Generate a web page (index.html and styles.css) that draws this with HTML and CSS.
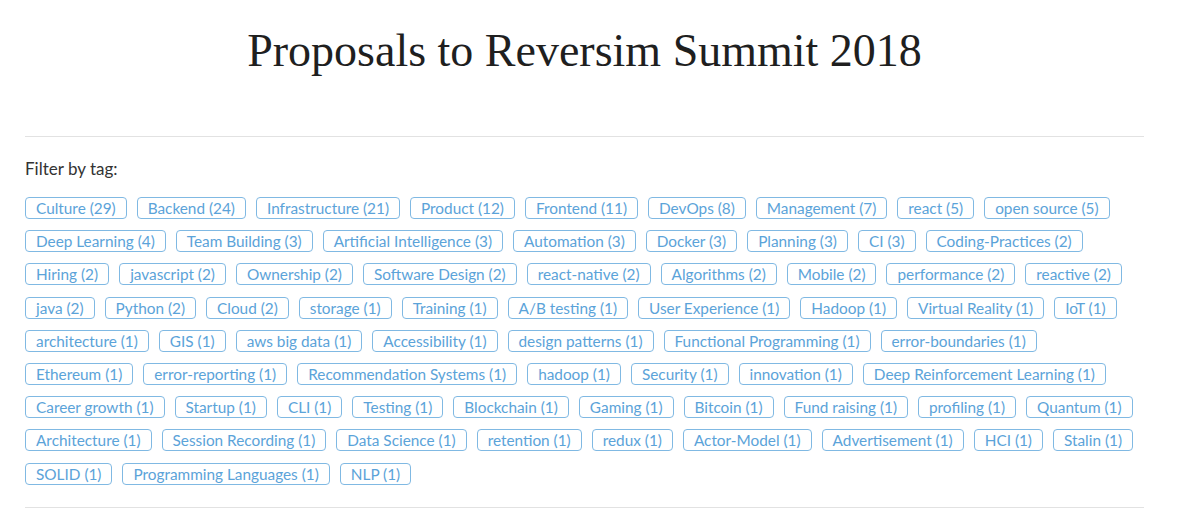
FILE: index.html
```html
<!DOCTYPE html>
<html>
<head>
<meta charset="utf-8">
<link rel="stylesheet" href="styles.css">
</head>
<body>
<div class="container">
  <h1 class="title">Proposals to Reversim Summit 2018</h1>
  <hr class="rule">
  <div class="filter-label">Filter by tag:</div>
  <div class="tags">
    <span class="tag">Culture (29)</span>
    <span class="tag">Backend (24)</span>
    <span class="tag">Infrastructure (21)</span>
    <span class="tag">Product (12)</span>
    <span class="tag">Frontend (11)</span>
    <span class="tag">DevOps (8)</span>
    <span class="tag">Management (7)</span>
    <span class="tag">react (5)</span>
    <span class="tag">open source (5)</span>
    <span class="tag">Deep Learning (4)</span>
    <span class="tag">Team Building (3)</span>
    <span class="tag">Artificial Intelligence (3)</span>
    <span class="tag">Automation (3)</span>
    <span class="tag">Docker (3)</span>
    <span class="tag">Planning (3)</span>
    <span class="tag">CI (3)</span>
    <span class="tag">Coding-Practices (2)</span>
    <span class="tag">Hiring (2)</span>
    <span class="tag">javascript (2)</span>
    <span class="tag">Ownership (2)</span>
    <span class="tag">Software Design (2)</span>
    <span class="tag">react-native (2)</span>
    <span class="tag">Algorithms (2)</span>
    <span class="tag">Mobile (2)</span>
    <span class="tag">performance (2)</span>
    <span class="tag">reactive (2)</span>
    <span class="tag">java (2)</span>
    <span class="tag">Python (2)</span>
    <span class="tag">Cloud (2)</span>
    <span class="tag">storage (1)</span>
    <span class="tag">Training (1)</span>
    <span class="tag">A/B testing (1)</span>
    <span class="tag">User Experience (1)</span>
    <span class="tag">Hadoop (1)</span>
    <span class="tag">Virtual Reality (1)</span>
    <span class="tag">IoT (1)</span>
    <span class="tag">architecture (1)</span>
    <span class="tag">GIS (1)</span>
    <span class="tag">aws big data (1)</span>
    <span class="tag">Accessibility (1)</span>
    <span class="tag">design patterns (1)</span>
    <span class="tag">Functional Programming (1)</span>
    <span class="tag">error-boundaries (1)</span>
    <span class="tag">Ethereum (1)</span>
    <span class="tag">error-reporting (1)</span>
    <span class="tag">Recommendation Systems (1)</span>
    <span class="tag">hadoop (1)</span>
    <span class="tag">Security (1)</span>
    <span class="tag">innovation (1)</span>
    <span class="tag">Deep Reinforcement Learning (1)</span>
    <span class="tag">Career growth (1)</span>
    <span class="tag">Startup (1)</span>
    <span class="tag">CLI (1)</span>
    <span class="tag">Testing (1)</span>
    <span class="tag">Blockchain (1)</span>
    <span class="tag">Gaming (1)</span>
    <span class="tag">Bitcoin (1)</span>
    <span class="tag">Fund raising (1)</span>
    <span class="tag">profiling (1)</span>
    <span class="tag">Quantum (1)</span>
    <span class="tag">Architecture (1)</span>
    <span class="tag">Session Recording (1)</span>
    <span class="tag">Data Science (1)</span>
    <span class="tag">retention (1)</span>
    <span class="tag">redux (1)</span>
    <span class="tag">Actor-Model (1)</span>
    <span class="tag">Advertisement (1)</span>
    <span class="tag">HCI (1)</span>
    <span class="tag">Stalin (1)</span>
    <span class="tag">SOLID (1)</span>
    <span class="tag">Programming Languages (1)</span>
    <span class="tag">NLP (1)</span>
  </div>
  <hr class="rule rule-bottom">
</div>
</body>
</html>
```

FILE: styles.css
```css
html, body {
  margin: 0;
  padding: 0;
  background: #fff;
}
body {
  font-family: "Lato", "Open Sans", sans-serif;
  color: #333;
}
.container {
  width: 1119px;
  margin-left: 25px;
}
.title {
  font-family: "Liberation Serif", "DejaVu Serif", serif;
  font-weight: normal;
  font-size: 46px;
  line-height: 56px;
  color: #1f1f1f;
  text-align: center;
  margin: 23px 0 0 0;
}
.rule {
  border: 0;
  border-top: 1px solid #e2e2e2;
  margin: 57px 0 0 0;
  height: 0;
}
.filter-label {
  font-size: 17px;
  line-height: 20px;
  margin-top: 22px;
}
.tags {
  display: flex;
  flex-wrap: wrap;
  gap: 11.2px 10px;
  margin-top: 18px;
}
.tag {
  display: inline-block;
  font-size: 15.35px;
  line-height: 20px;
  padding: 0 10px;
  border: 1px solid #80b9e3;
  border-radius: 4px;
  color: #5ba3d9;
}
.rule-bottom {
  margin-top: 22px;
}
```
